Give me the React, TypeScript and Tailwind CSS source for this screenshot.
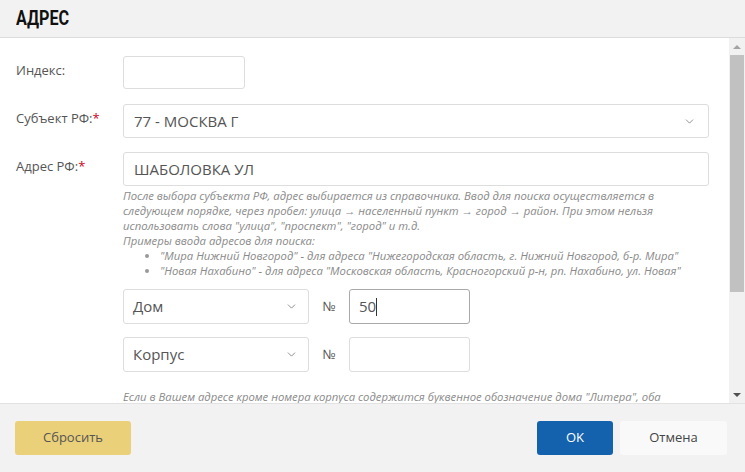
import { ChevronDown } from "lucide-react";

function Chevron() {
  return <ChevronDown size={13} strokeWidth={1.5} className="text-[#777]" />;
}

function Label({ text, required }: { text: string; required?: boolean }) {
  return (
    <div className="w-[107px] shrink-0 pt-[5px] text-[13px] text-[#555]">
      {text}
      {required && <span className="text-[#d0021b]">*</span>}
    </div>
  );
}

export default function App() {
  return (
    <div className="w-[745px] h-[472px] flex flex-col bg-white overflow-hidden font-['Open_Sans',sans-serif] text-[#555]">
      {/* header */}
      <div className="h-[38px] shrink-0 bg-[#f2f2f2] border-b border-[#dcdcdc] flex items-center px-[16px]">
        <h2 className="font-['Roboto',sans-serif] font-bold text-[21px] text-[#111] leading-none scale-x-[0.77] origin-left">
          АДРЕС
        </h2>
      </div>

      {/* body */}
      <div className="h-[365px] shrink-0 flex">
        <div className="flex-1 min-w-0 overflow-hidden pl-[16px] pr-[20px] pt-[18px]">
          <div className="flex">
            <Label text="Индекс:" />
            <div className="w-[122px] h-[33px] border border-[#ddd] rounded-[3px]" />
          </div>

          <div className="flex mt-[15px]">
            <Label text="Субъект РФ:" required />
            <div className="flex-1 min-w-0 h-[34px] border border-[#ddd] rounded-[3px] flex items-center justify-between pl-[10px] pr-[12px]">
              <span className="text-[15px] text-[#555]">77 - МОСКВА Г</span>
              <Chevron />
            </div>
          </div>

          <div className="flex mt-[14px]">
            <Label text="Адрес РФ:" required />
            <div className="flex-1 min-w-0">
              <div className="h-[34px] border border-[#ddd] rounded-[3px] flex items-center pl-[10px]">
                <span className="text-[15px] text-[#555]">ШАБОЛОВКА УЛ</span>
              </div>
              <div className="mt-[2px] text-[11.3px] leading-[15px] italic text-[#8a8a8a] whitespace-nowrap">
                <p>После выбора субъекта РФ, адрес выбирается из справочника. Ввод для поиска осуществляется в</p>
                <p>следующем порядке, через пробел: улица → населенный пункт → город → район. При этом нельзя</p>
                <p>использовать слова "улица", "проспект", "город" и т.д.</p>
                <p>Примеры ввода адресов для поиска:</p>
                <ul className="list-disc pl-[37px] marker:text-[#999]">
                  <li>"Мира Нижний Новгород" - для адреса "Нижегородская область, г. Нижний Новгород, б-р. Мира"</li>
                  <li>"Новая Нахабино" - для адреса "Московская область, Красногорский р-н, рп. Нахабино, ул. Новая"</li>
                </ul>
              </div>

              <div className="flex items-center mt-[11px]">
                <div className="w-[186px] h-[35px] border border-[#ddd] rounded-[3px] flex items-center justify-between pl-[9px] pr-[10px]">
                  <span className="text-[15px]">Дом</span>
                  <Chevron />
                </div>
                <span className="w-[40px] text-center text-[13px]">№</span>
                <div className="w-[121px] h-[35px] border border-[#a9a9a9] rounded-[3px] flex items-center pl-[9px]">
                  <span className="text-[15px]">50</span>
                  <span className="w-px h-[18px] bg-[#333]" />
                </div>
              </div>

              <div className="flex items-center mt-[13px]">
                <div className="w-[186px] h-[35px] border border-[#ddd] rounded-[3px] flex items-center justify-between pl-[9px] pr-[10px]">
                  <span className="text-[15px]">Корпус</span>
                  <Chevron />
                </div>
                <span className="w-[40px] text-center text-[13px]">№</span>
                <div className="w-[121px] h-[35px] border border-[#ddd] rounded-[3px]" />
              </div>

              <p className="mt-[17px] text-[11.3px] leading-[15px] italic text-[#8a8a8a] whitespace-nowrap">
                Если в Вашем адресе кроме номера корпуса содержится буквенное обозначение дома "Литера", оба
              </p>
            </div>
          </div>
        </div>

        {/* scrollbar */}
        <div className="w-[16px] shrink-0 bg-[#f1f1f1] flex flex-col items-center">
          <div className="h-[17px] flex items-center justify-center">
            <div className="w-0 h-0 border-l-[4px] border-r-[4px] border-b-[4px] border-l-transparent border-r-transparent border-b-[#a3a3a3]" />
          </div>
          <div className="w-[14px] h-[237px] bg-[#c1c1c1]" />
          <div className="flex-1" />
          <div className="h-[17px] flex items-center justify-center">
            <div className="w-0 h-0 border-l-[4px] border-r-[4px] border-t-[4px] border-l-transparent border-r-transparent border-t-[#505050]" />
          </div>
        </div>
      </div>

      {/* footer */}
      <div className="flex-1 bg-[#f2f2f2] border-t border-[#e2e2e2] flex items-center justify-between pl-[15px] pr-[18px]">
        <button className="w-[116px] h-[34px] bg-[#ebd07a] rounded-[3px] text-[13px] text-[#555]">Сбросить</button>
        <div className="flex gap-[7px]">
          <button className="w-[76px] h-[34px] bg-[#1462ae] rounded-[3px] text-[13px] text-white">OK</button>
          <button className="w-[107px] h-[34px] bg-[#f9f9f9] rounded-[3px] text-[13px] text-[#444]">Отмена</button>
        </div>
      </div>
    </div>
  );
}
